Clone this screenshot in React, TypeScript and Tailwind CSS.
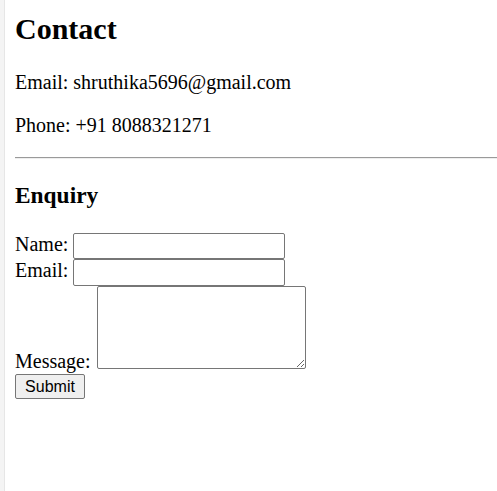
import React from "react";

export default function App() {
  return (
    <div className="flex min-h-screen bg-white text-black">
      <div className="w-[5px] shrink-0 bg-[#f4f4f4] border-r border-[#e6e6e6]" />
      <div className="flex-1 pl-[10px] font-['Liberation_Serif',serif]">
        <h1 className="pt-[12px] text-[30px] font-bold leading-[34.5px]">Contact</h1>
        <p className="mt-[24.5px] text-[20px] leading-[23px]">Email: shruthika5696@gmail.com</p>
        <p className="mt-[20px] text-[20px] leading-[23px]">Phone: +91 8088321271</p>
        <hr className="mt-[20px] h-0 border-0 border-t border-b border-t-[#9a9a9a] border-b-[#eeeeee]" />
        <h3 className="mt-[23.4px] text-[23.4px] font-bold leading-[26.9px]">Enquiry</h3>
        <form className="mt-[23.6px] text-[20px] leading-[23px]" onSubmit={(e) => e.preventDefault()}>
          <div className="flex items-start gap-[5px]">
            <label>Name:</label>
            <input
              type="text"
              className="h-[26px] w-[212px] rounded-[2px] border border-[#767676] bg-white px-[2px] font-['Liberation_Sans',sans-serif] text-[16px] outline-none"
            />
          </div>
          <div className="flex items-start gap-[5px]">
            <label>Email:</label>
            <input
              type="text"
              className="h-[27px] w-[212px] rounded-[2px] border border-[#767676] bg-white px-[2px] font-['Liberation_Sans',sans-serif] text-[16px] outline-none"
            />
          </div>
          <div className="flex items-end gap-[6px]">
            <label className="leading-[23px]">Message:</label>
            <textarea className="mb-[4.5px] h-[83px] w-[209px] resize rounded-[2px] border border-[#767676] bg-white font-['Liberation_Mono',monospace] text-[16px] outline-none" />
          </div>
          <div className="pt-[1px]">
            <button
              type="submit"
              className="flex h-[25px] w-[70px] items-center justify-center rounded-[2px] border border-[#767676] bg-[#efefef] font-['Liberation_Sans',sans-serif] text-[16px] leading-none text-black"
            >
              Submit
            </button>
          </div>
        </form>
      </div>
    </div>
  );
}
